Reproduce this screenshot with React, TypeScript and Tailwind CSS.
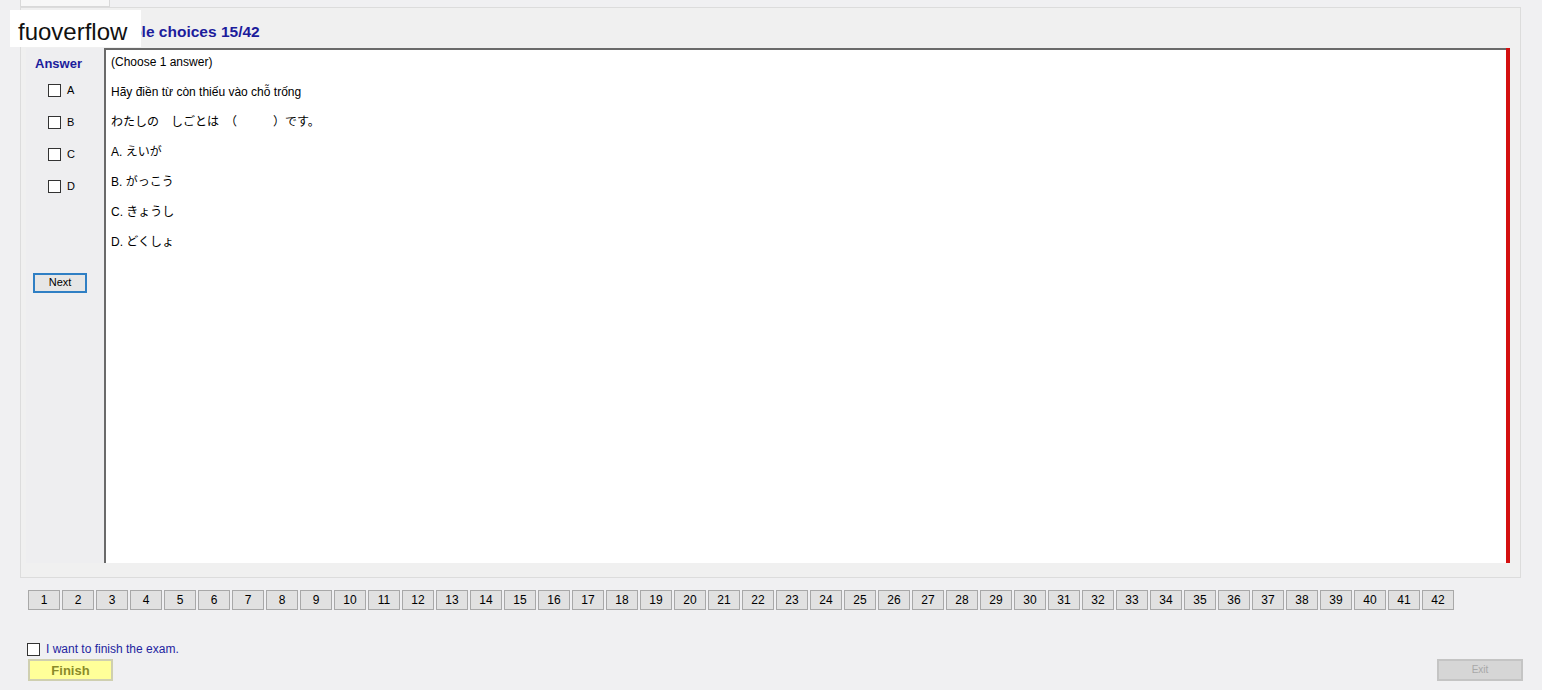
const questions = Array.from({ length: 42 }, (_, i) => i + 1);

const lines = [
  "(Choose 1 answer)",
  "Hãy điền từ còn thiếu vào chỗ trống",
  "わたしの　しごとは　（　　　）です。",
  "A.  えいが",
  "B.  がっこう",
  "C.  きょうし",
  "D.  どくしょ",
];

export default function App() {
  return (
    <div
      className="relative h-[690px] w-[1542px] overflow-hidden bg-[#f0f0f2] text-[12px] text-black"
      style={{ fontFamily: '"Liberation Sans", "Noto Sans CJK JP", sans-serif' }}
    >
      {/* tab strip */}
      <div className="ml-[20px] h-[7px] w-[90px] border-x border-b border-[#d9d9d9] bg-[#f7f7f7]" />

      {/* group panel */}
      <div className="ml-[20px] h-[571px] w-[1501px] border border-[#dcdcdc] bg-[#f0f0f0] pl-[5px] pt-[15px] pr-[10px]">
        <div className="ml-[70px] h-[25px] text-[15.5px] font-bold leading-[18px] text-[#1c1c9c]">
          Multiple choices 15/42
        </div>
        <div className="flex h-[515px]">
          {/* answer column */}
          <div className="flex w-[78px] flex-col bg-[#eeeef0] pt-[6px]">
            <div className="pl-[9px] text-[13px] font-bold text-[#1c1c9c]">Answer</div>
            <div className="mt-[10px] flex flex-col gap-[19px] pl-[22px]">
              {["A", "B", "C", "D"].map((l) => (
                <label key={l} className="flex h-[13px] items-center gap-[6px] text-[11px]">
                  <span className="h-[13px] w-[13px] border border-[#333] bg-white" />
                  {l}
                </label>
              ))}
            </div>
            <button className="ml-[7px] mt-[80px] h-[20px] w-[54px] border-2 border-[#2f7fc4] bg-[#e6e6e6] text-[11px] leading-none">
              Next
            </button>
          </div>

          {/* question content */}
          <div className="flex flex-1">
            <div className="flex-1 border-l-2 border-t-2 border-[#6a6a6a] bg-white pl-[5px] pt-[4px]">
              <div className="flex flex-col gap-[14px]">
                {lines.map((t) => (
                  <div key={t} className="h-[16px] leading-[16px]">
                    {t}
                  </div>
                ))}
              </div>
            </div>
            <div className="w-[4px] bg-[#d41010]" />
          </div>
        </div>
      </div>

      {/* question number buttons */}
      <div className="ml-[28px] mt-[12px] flex gap-[2px]">
        {questions.map((n) => (
          <button
            key={n}
            className="h-[20px] w-[32px] border border-[#a8a8a8] bg-[#e1e1e1] text-[12px] leading-none"
          >
            {n}
          </button>
        ))}
      </div>

      {/* finish area */}
      <div className="ml-[27px] mt-[30px] flex items-center gap-[6px]">
        <span className="h-[13px] w-[13px] border border-[#333] bg-white" />
        <span className="text-[12px] text-[#2424a0]">I want to finish the exam.</span>
      </div>
      <div className="mt-[1px] flex justify-between pl-[28px] pr-[19px]">
        <button className="h-[22px] w-[85px] border-2 border-[#cfcfb0] bg-[#ffff99] text-[13px] font-bold leading-none text-[#8a8a2a]">
          Finish
        </button>
        <button className="h-[22px] w-[86px] border-2 border-[#c4c4c4] bg-[#d6d6d6] text-[10px] leading-none text-[#a8a8a8]">
          Exit
        </button>
      </div>

      {/* watermark */}
      <div className="absolute left-[10px] top-[10px] z-10 flex h-[37px] w-[131px] items-center bg-white pl-[8px] pt-[6px] text-[24px] text-[#111]">
        fuoverflow
      </div>
    </div>
  );
}
